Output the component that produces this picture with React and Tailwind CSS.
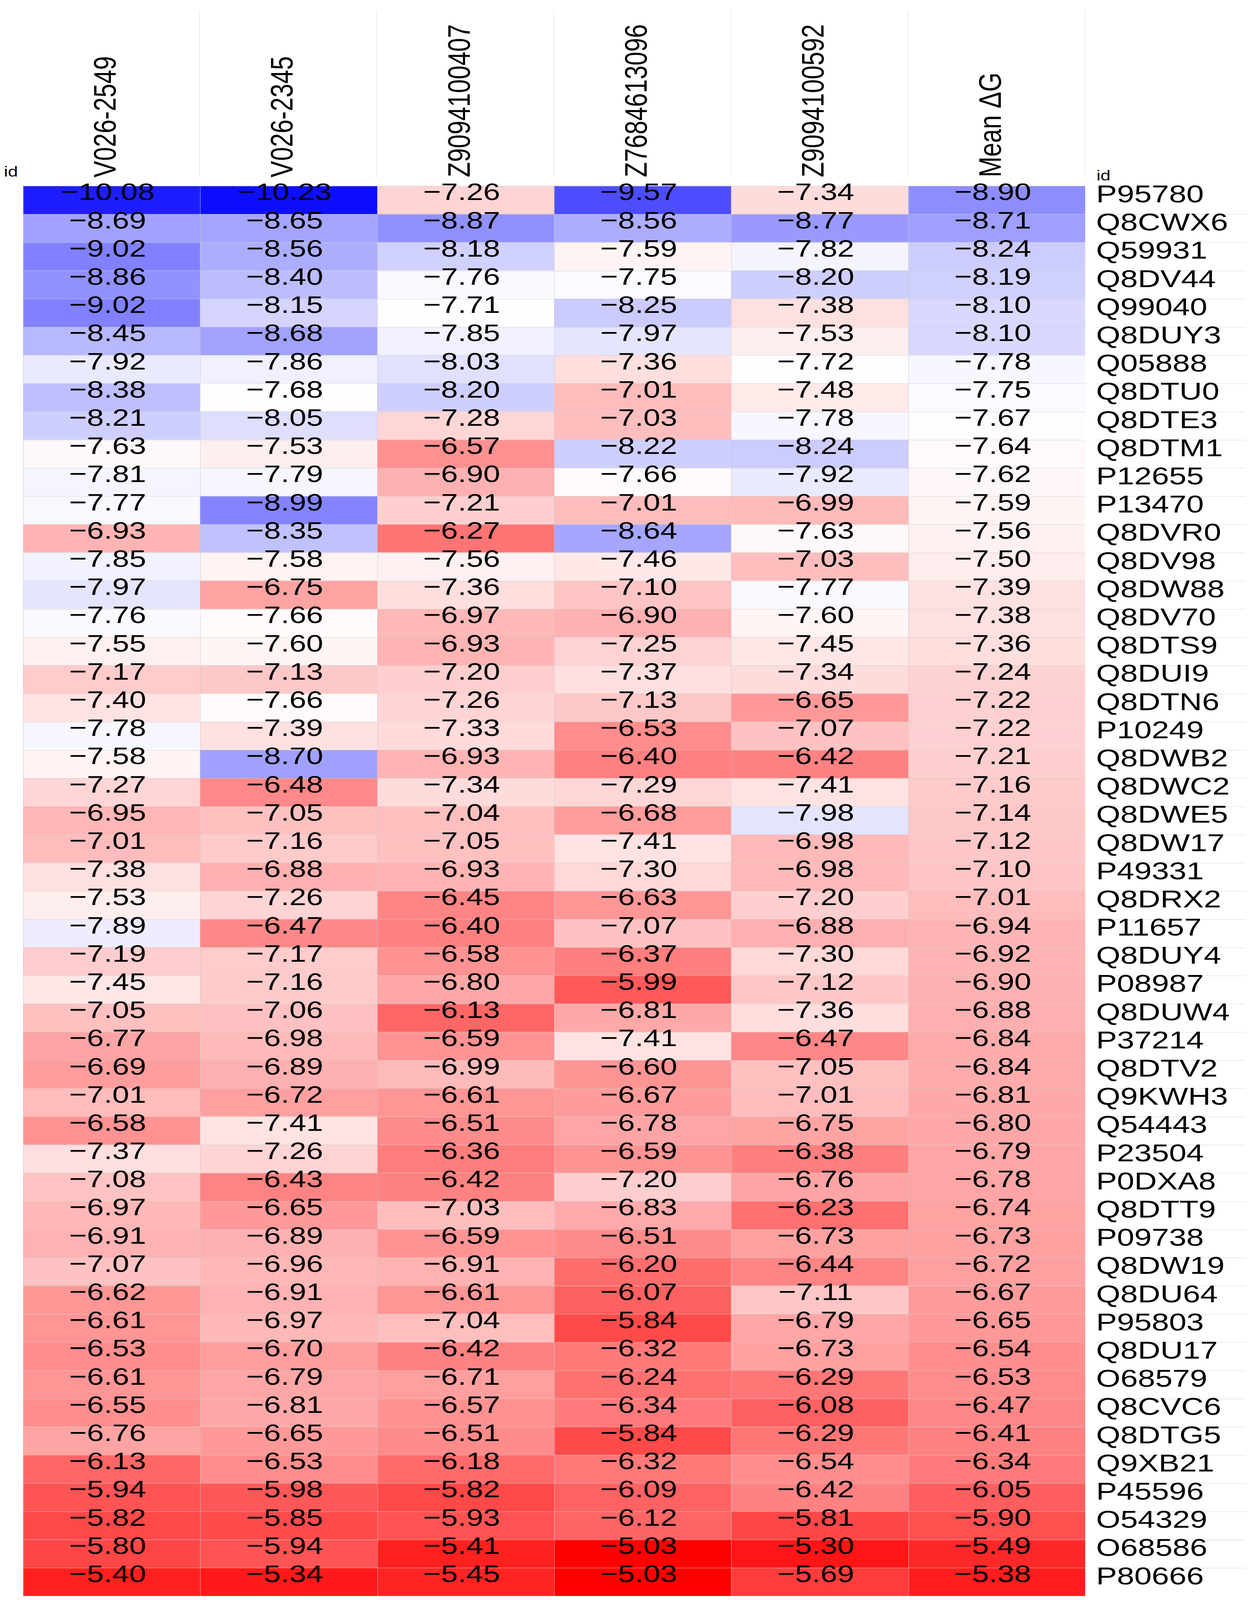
const columns = ['V026-2549', 'V026-2345', 'Z9094100407', 'Z7684613096', 'Z9094100592', 'Mean ΔG'];

const rows = [
  ['P95780', -10.08, -10.23, -7.26, -9.57, -7.34, -8.9],
  ['Q8CWX6', -8.69, -8.65, -8.87, -8.56, -8.77, -8.71],
  ['Q59931', -9.02, -8.56, -8.18, -7.59, -7.82, -8.24],
  ['Q8DV44', -8.86, -8.4, -7.76, -7.75, -8.2, -8.19],
  ['Q99040', -9.02, -8.15, -7.71, -8.25, -7.38, -8.1],
  ['Q8DUY3', -8.45, -8.68, -7.85, -7.97, -7.53, -8.1],
  ['Q05888', -7.92, -7.86, -8.03, -7.36, -7.72, -7.78],
  ['Q8DTU0', -8.38, -7.68, -8.2, -7.01, -7.48, -7.75],
  ['Q8DTE3', -8.21, -8.05, -7.28, -7.03, -7.78, -7.67],
  ['Q8DTM1', -7.63, -7.53, -6.57, -8.22, -8.24, -7.64],
  ['P12655', -7.81, -7.79, -6.9, -7.66, -7.92, -7.62],
  ['P13470', -7.77, -8.99, -7.21, -7.01, -6.99, -7.59],
  ['Q8DVR0', -6.93, -8.35, -6.27, -8.64, -7.63, -7.56],
  ['Q8DV98', -7.85, -7.58, -7.56, -7.46, -7.03, -7.5],
  ['Q8DW88', -7.97, -6.75, -7.36, -7.1, -7.77, -7.39],
  ['Q8DV70', -7.76, -7.66, -6.97, -6.9, -7.6, -7.38],
  ['Q8DTS9', -7.55, -7.6, -6.93, -7.25, -7.45, -7.36],
  ['Q8DUI9', -7.17, -7.13, -7.2, -7.37, -7.34, -7.24],
  ['Q8DTN6', -7.4, -7.66, -7.26, -7.13, -6.65, -7.22],
  ['P10249', -7.78, -7.39, -7.33, -6.53, -7.07, -7.22],
  ['Q8DWB2', -7.58, -8.7, -6.93, -6.4, -6.42, -7.21],
  ['Q8DWC2', -7.27, -6.48, -7.34, -7.29, -7.41, -7.16],
  ['Q8DWE5', -6.95, -7.05, -7.04, -6.68, -7.98, -7.14],
  ['Q8DW17', -7.01, -7.16, -7.05, -7.41, -6.98, -7.12],
  ['P49331', -7.38, -6.88, -6.93, -7.3, -6.98, -7.1],
  ['Q8DRX2', -7.53, -7.26, -6.45, -6.63, -7.2, -7.01],
  ['P11657', -7.89, -6.47, -6.4, -7.07, -6.88, -6.94],
  ['Q8DUY4', -7.19, -7.17, -6.58, -6.37, -7.3, -6.92],
  ['P08987', -7.45, -7.16, -6.8, -5.99, -7.12, -6.9],
  ['Q8DUW4', -7.05, -7.06, -6.13, -6.81, -7.36, -6.88],
  ['P37214', -6.77, -6.98, -6.59, -7.41, -6.47, -6.84],
  ['Q8DTV2', -6.69, -6.89, -6.99, -6.6, -7.05, -6.84],
  ['Q9KWH3', -7.01, -6.72, -6.61, -6.67, -7.01, -6.81],
  ['Q54443', -6.58, -7.41, -6.51, -6.78, -6.75, -6.8],
  ['P23504', -7.37, -7.26, -6.36, -6.59, -6.38, -6.79],
  ['P0DXA8', -7.08, -6.43, -6.42, -7.2, -6.76, -6.78],
  ['Q8DTT9', -6.97, -6.65, -7.03, -6.83, -6.23, -6.74],
  ['P09738', -6.91, -6.89, -6.59, -6.51, -6.73, -6.73],
  ['Q8DW19', -7.07, -6.96, -6.91, -6.2, -6.44, -6.72],
  ['Q8DU64', -6.62, -6.91, -6.61, -6.07, -7.11, -6.67],
  ['P95803', -6.61, -6.97, -7.04, -5.84, -6.79, -6.65],
  ['Q8DU17', -6.53, -6.7, -6.42, -6.32, -6.73, -6.54],
  ['O68579', -6.61, -6.79, -6.71, -6.24, -6.29, -6.53],
  ['Q8CVC6', -6.55, -6.81, -6.57, -6.34, -6.08, -6.47],
  ['Q8DTG5', -6.76, -6.65, -6.51, -5.84, -6.29, -6.41],
  ['Q9XB21', -6.13, -6.53, -6.18, -6.32, -6.54, -6.34],
  ['P45596', -5.94, -5.98, -5.82, -6.09, -6.42, -6.05],
  ['O54329', -5.82, -5.85, -5.93, -6.12, -5.81, -5.9],
  ['O68586', -5.8, -5.94, -5.41, -5.03, -5.3, -5.49],
  ['P80666', -5.4, -5.34, -5.45, -5.03, -5.69, -5.38],
];

const PAGE_H = 5163;

// blue-white-red scale, white near -7.70
function cellColor(v) {
  const mid = -7.7;
  if (v >= mid) {
    const t = Math.min(1, (v - mid) / 2.62);
    const g = Math.round(255 * (1 - t));
    return `rgb(255, ${g}, ${g})`;
  }
  const t = Math.min(1, (mid - v) / 2.68);
  const g = Math.round(255 * (1 - t));
  return `rgb(${g}, ${g}, 255)`;
}

const fmt = (v) => '\u2212' + Math.abs(v).toFixed(2);

export default function App() {
  // the window may be shorter than the figure; squeeze it vertically to fit
  const fit = typeof window !== 'undefined' ? Math.min(1, window.innerHeight / PAGE_H) : 1;

  return (
    <div className="w-[3219px] h-screen overflow-hidden bg-white">
      <div
        className="w-[3219px] h-[5163px] origin-top-left text-black font-['Liberation_Sans',Arial,sans-serif]"
        style={{ transform: `scale(1, ${fit})` }}
      >
        {/* column headers */}
        <div className="flex h-[572px] pt-[33px]">
          <div className="w-[59px] flex items-end pl-[10px]">
            <span className="text-[46px] leading-none -mb-[5px]">id</span>
          </div>
          <div className="w-[2720px] grid grid-cols-6">
            {columns.map((c) => (
              <div key={c} className="flex flex-col justify-end items-center border-r-2 border-[#ebebeb] pr-[31px]">
                <span className="text-[80px] leading-none whitespace-nowrap [writing-mode:vertical-rl] rotate-180">{c}</span>
              </div>
            ))}
          </div>
          <div className="flex items-end pl-[29px]">
            <span className="text-[46px] leading-[36px] -mb-[12px]">id</span>
          </div>
        </div>

        {/* heatmap body */}
        <div className="flex mt-[28px]">
          <div className="w-[59px]" />
          <div className="w-[2720px] grid grid-cols-6">
            {rows.map((r) =>
              r.slice(1).map((v, i) => (
                <div
                  key={r[0] + i}
                  className="h-[91px] flex justify-center items-start pr-[22px] border-t-2 border-l-2 border-[rgba(200,200,200,0.45)]"
                  style={{ backgroundColor: cellColor(v) }}
                >
                  <span className="text-[78px] leading-none -mt-[22px] whitespace-nowrap">{fmt(v)}</span>
                </div>
              ))
            )}
          </div>
          <div className="ml-[28px] w-[383px] flex flex-col">
            {rows.map((r, i) => (
              <div
                key={r[0]}
                className={`h-[91px] border-t-2 ${i === 0 ? 'border-transparent' : 'border-[#e6e6e6]'}`}
              >
                <div className="text-[80px] leading-none -mt-[16px] whitespace-nowrap">{r[0]}</div>
              </div>
            ))}
          </div>
        </div>
      </div>
    </div>
  );
}
